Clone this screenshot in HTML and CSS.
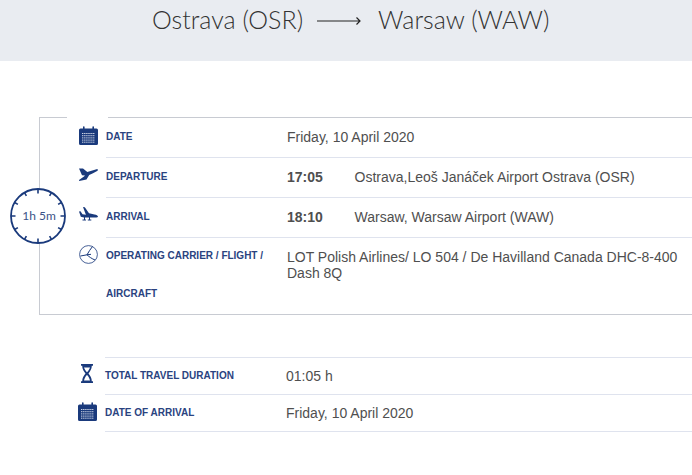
FILE: index.html
```html
<!DOCTYPE html>
<html lang="en">
<head>
<meta charset="utf-8">
<title>Flight details</title>
<link rel="stylesheet" href="styles.css">
</head>
<body>
<svg class="defs" width="0" height="0" aria-hidden="true">
  <symbol id="cal" viewBox="0 0 19 19">
    <path fill="#1a3a7c" d="M1.500 2.500H4V1a.8.8 0 0 1 1.600 0v1.500h7.800V1A.8.8 0 0 1 15 1v1.500h2.500A1.500 1.500 0 0 1 19 4v13.500a1.500 1.500 0 0 1-1.500 1.500h-16A1.500 1.500 0 0 1 0 17.500V4a1.500 1.500 0 0 1 1.500-1.500z"/>
    <path stroke="#cfd6e6" stroke-width="1" stroke-dasharray="1.400 .7" d="M3 7.500h13M3 9.700h13M3 11.900h13M3 14.100h13M3 16.200h13"/>
  </symbol>
</svg>
<header class="top">
  <h1 class="route">
    <span>Ostrava (OSR)</span>
    <svg class="arrow" width="44" height="10" viewBox="0 0 44 10"><path d="M0 5h43M39.500 1.500L43 5l-3.500 3.500" fill="none" stroke="#222" stroke-width="1.200"/></svg>
    <span>Warsaw (WAW)</span>
  </h1>
</header>
<main>
  <section class="trip">
    <div class="gap"></div>
    <div class="clock">
      <svg width="56" height="56" viewBox="0 0 56 56">
        <circle cx="28" cy="28" r="27" fill="#fff" stroke="#1a3a7c" stroke-width="1.800"/>
        <g stroke="#1a3a7c" stroke-width="1.600">
          <path d="M28 1v4.500M28 50.500V55M1 28h4.500M50.500 28H55"/>
          <path d="M14.500 4.600l1.900 3.300M41.500 4.600l-1.900 3.300M14.500 51.400l1.900-3.300M41.500 51.400l-1.900-3.300"/>
          <path d="M4.600 14.500l3.300 1.900M51.400 14.500l-3.300 1.900M4.600 41.500l3.300-1.900M51.400 41.500l-3.300-1.900"/>
        </g>
      </svg>
      <span class="clock-text">1h 5m</span>
    </div>
    <div class="row">
      <svg class="ico"><use href="#cal"/></svg>
      <div class="cell line"><span class="label">DATE</span><span class="val">Friday, 10 April 2020</span></div>
    </div>
    <div class="row">
      <svg class="ico plane up" viewBox="0 0 19 13"><path fill="#1a3a7c" d="M0 0l4-.1 4.300 3.700L15 1.500 18.300.6c.5.300.6 1.100.3 1.600L14 4.800l-3.800 1.800L7.500 11 .2 12.500l-.2-1L5 8 6 7 3 6.800z"/></svg>
      <div class="cell line"><span class="label">DEPARTURE</span><span class="val"><b class="time">17:05</b>Ostrava,Leoš Janáček Airport Ostrava (OSR)</span></div>
    </div>
    <div class="row">
      <svg class="ico plane down" viewBox="0 0 19 14"><path fill="#1a3a7c" d="M4 0l1.800.2 4.200 6 5.500 1.300c1.800.4 3.500 1.200 3.500 2.100 0 .5-.7.900-1.500.9h-6.500v2h1.300v1H8.800v-1H10v-2H6v2h1v1H3.500v-1H5v-2.100L1.800 9.800 0 4.500l1.500-.2 2 3 3.400.5z"/></svg>
      <div class="cell line"><span class="label">ARRIVAL</span><span class="val"><b class="time">18:10</b>Warsaw, Warsaw Airport (WAW)</span></div>
    </div>
    <div class="row">
      <svg class="ico logo" viewBox="0 0 19 19"><circle cx="9.500" cy="9.500" r="8.900" fill="none" stroke="#1a3a7c" stroke-width=".8"/><path fill="none" stroke="#1a3a7c" stroke-width="1" d="M13.500 1.500C11.500 4 9.500 7 8 9.800L1.500 11M8 9.800c2 2 5 4 8 5.200M8 9.800l4-.5"/></svg>
      <div class="cell tall"><span class="label wrap">OPERATING CARRIER / FLIGHT / AIRCRAFT</span><span class="val carrier">LOT Polish Airlines/ LO 504 / De Havilland Canada DHC-8-400 Dash 8Q</span></div>
    </div>
  </section>
  <section class="summary">
    <div class="row s">
      <svg class="ico glass" viewBox="0 0 12 19"><path fill="#1a3a7c" d="M0 0h12v1.800h-1.200c0 3-1.500 5.400-3.300 7.700 1.800 2.100 3.300 4.600 3.300 7.700H12V19H0v-1.800h1.200c0-3 1.500-5.600 3.300-7.700C2.700 7.300 1.200 4.800 1.200 1.800H0zM3 3.600c.6 1.800 1.700 3.500 3 4.700 1.300-1.200 2.400-2.900 3-4.700zM6 11.100c-1.400 1.300-2.600 3.400-3 5.500h6c-.4-2.100-1.600-4.200-3-5.500z"/></svg>
      <div class="cell line s-top"><span class="label">TOTAL TRAVEL DURATION</span><span class="val">01:05 h</span></div>
    </div>
    <div class="row s">
      <svg class="ico s-cal"><use href="#cal"/></svg>
      <div class="cell line"><span class="label">DATE OF ARRIVAL</span><span class="val">Friday, 10 April 2020</span></div>
    </div>
  </section>
</main>
</body>
</html>
```
FILE: styles.css
```css
* { box-sizing: border-box; }
html, body { margin: 0; padding: 0; background: #fff; overflow: hidden; }
body { font-family: "Liberation Sans", Arial, sans-serif; width: 692px; height: 475px; }
.defs { position: absolute; }
.top { height: 61px; background: #e9ecf1; padding-left: 152px; }
.route { margin: 0; display: flex; align-items: center; height: 39px; font: 300 25px/39px Lato, sans-serif; color: #333; }
.arrow { margin: 2px 17px 0 14px; }
.trip { position: relative; margin: 56px 0 0 39px; height: 198px; border: 1px solid #c8cbd2; border-right: 0; }
.gap { position: absolute; left: 27px; top: -1px; width: 41px; height: 1px; background: #fff; }
.clock { position: absolute; left: -30px; top: 70px; width: 56px; height: 56px; }
.clock-text { position: absolute; inset: -1px -1px 0 0; display: flex; align-items: center; justify-content: center; padding-left: 1px; font: 400 12px Lato, sans-serif; color: #3b5387; }
.row { display: flex; padding-left: 39px; }
.ico { flex: none; width: 19px; height: 19px; margin-top: 8px; margin-right: 8px; }
.plane { height: 14px; }
.up { margin-top: 10px; }
.down { margin-top: 9px; }
.logo { margin-top: 7px; }
.cell { flex: 1; display: flex; align-items: flex-start; padding-top: 11px; }
.line { height: 40px; border-bottom: 1px solid #dfe3ee; }
.tall { height: 76px; padding-top: 0; }
.label { flex: none; width: 181px; padding-top: 1px; font-size: 10px; font-weight: 700; line-height: 14px; color: #2a437f; }
.wrap { margin-top: -2px; line-height: 38px; }
.val { flex: 1; font-size: 14px; line-height: 16px; color: #4f4f4f; }
.carrier { padding-top: 11px; }
.time { display: inline-block; width: 67.500px; }
.summary { margin-top: 42px; }
.row.s { padding-left: 78px; }
.s .cell { height: 37px; padding-top: 10px; }
.s .ico { margin-top: 7px; }
.s-top { height: 38px !important; border-top: 1px solid #dfe3ee; }
.glass { width: 12px; height: 19px; margin-left: 3px; margin-right: 12px; }
```
